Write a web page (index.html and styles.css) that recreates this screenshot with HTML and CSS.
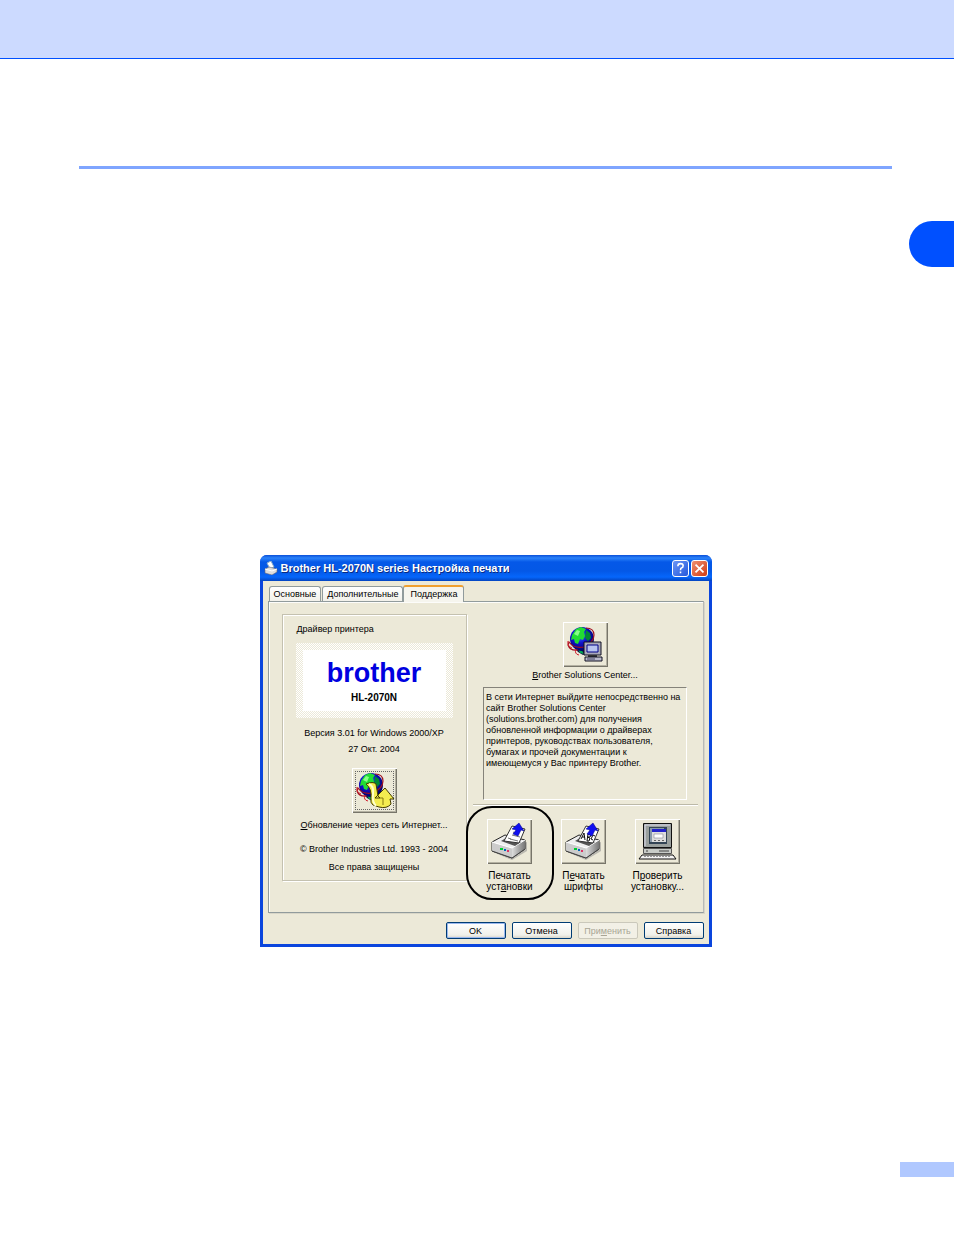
FILE: index.html
```html
<!DOCTYPE html>
<html lang="ru">
<head>
<meta charset="utf-8">
<title>Brother HL-2070N series Настройка печати</title>
<link rel="stylesheet" href="styles.css">
</head>
<body>
<svg class="defs" aria-hidden="true">
  <defs>
    <radialGradient id="sea" cx="40%" cy="35%" r="65%"><stop offset="0" stop-color="#38f"/><stop offset=".5" stop-color="#11c"/><stop offset="1" stop-color="#006"/></radialGradient>
    <linearGradient id="side" x1="0" x2="1"><stop offset="0" stop-color="#ddd"/><stop offset="1" stop-color="#777"/></linearGradient>
    <g id="globe">
      <path d="M11 25l4 5 5 3 6-3-2-7z" fill="#114"/>
      <path d="M14 26l4 1 3 5-4-1z" fill="#0a5"/>
      <circle cx="19" cy="17" r="12" fill="url(#sea)"/>
      <path d="M9 13l4-6 5-2 5 2-2 3 1 4-2 4-3-1-2 5-3-1-1-4-3 1z" fill="#2d3"/>
      <path d="M11 12l3-4 3 1-2 5z" fill="#8f8"/>
      <path d="M23 8l4 3 1 5-3 3-3-3z" fill="#083"/>
      <path d="M23 6q8 0 8 7t-10 12q-10 2-15-5l-1 3q2 6 10 5" fill="none" stroke="#a01020" stroke-width="1.2"/>
      <path d="M5 19q-1 5 4 7m4 1q-2 5 3 6" fill="none" stroke="#d02030"/>
    </g>
    <g id="printer">
      <path d="M6 33l19 8 15-9v-9z" fill="#888" opacity=".5"/>
      <path d="M5 23l13-7 20 5v9l-13 9-20-7z" fill="#eee" stroke="#222"/>
      <path d="M5 23l20 6v10L5 32z" fill="#ccc"/>
      <path d="M25 29l13-8v9l-13 9z" fill="url(#side)"/>
      <path d="M5 23l20 6 13-8" fill="none" stroke="#fff"/>
      <path d="M14 22l5-3 15 4-6 4z" fill="#555"/>
      <path d="M17 22l8-15 13 3-6 14z" fill="#fff" stroke="#333"/>
      <path d="M5 32l20 7 13-9" fill="none" stroke="#444"/>
      <path d="M13 29h3v2h-3z" fill="#0c3"/><path d="M17 30h2v2h-2z" fill="#06b"/><path d="M20 31h2v2h-2z" fill="#d36"/>
    </g>
    <path id="up" d="M25 10l7-6 5 8-3-1-3 6-5-2 3-4z" fill="#1010f0" stroke="#008" stroke-width=".5"/>
  </defs>
</svg>
<header class="page-head"></header>
<main class="page">
  <hr class="rule">
  <div class="chapter-mark"></div>
  <section class="dialog" aria-labelledby="dialog-title">
    <div class="titlebar">
      <svg class="title-icon" viewBox="0 0 14 14"><path d="M3 2l4-2 3 6-4 2z" fill="#fff" stroke="#8ac"/><path d="M1 8l4-2 8 2v3l-5 3-7-2z" fill="#ddd" stroke="#667" stroke-width=".6"/><path d="M1 8l7 2 5-2" fill="none" stroke="#fff"/></svg>
      <h1 class="title" id="dialog-title">Brother HL-2070N series Настройка печати</h1>
      <button class="caption-btn" type="button" aria-label="Справка по окну"><svg viewBox="0 0 17 17"><path d="M5.500 6q0-3 3-3t3 2.500q0 2-2 2.500-1 .5-1 2.500M8.500 12v2" fill="none" stroke="#fff" stroke-width="1.800"/></svg></button>
      <button class="caption-btn close" type="button" aria-label="Закрыть"><svg viewBox="0 0 17 17"><path d="M4 4l9 9M13 4l-9 9" stroke="#fff" stroke-width="2"/></svg></button>
    </div>
    <div class="client">
      <div class="tabs" role="tablist">
        <button class="tab" type="button" role="tab">Основные</button>
        <button class="tab" type="button" role="tab">Дополнительные</button>
        <button class="tab active" type="button" role="tab" aria-selected="true">Поддержка</button>
      </div>
      <div class="panel" role="tabpanel">
        <div class="driver">
          <h2 class="driver-title">Драйвер принтера</h2>
          <div class="logo-frame"><div class="logo-box">
            <span class="logo">brother</span>
            <strong class="model">HL-2070N</strong>
          </div></div>
          <p class="line">Версия 3.01 for Windows 2000/XP</p>
          <p class="line">27 Окт. 2004</p>
          <button class="icon-btn focused" type="button" aria-labelledby="update-label">
            <svg viewBox="0 0 45 45"><use href="#globe"/><path d="M14 16q7-3 10 0l2 12 2 2h-5l10-10 9 11h-4l1 5q-4 5-12 3l-6-2q-3-2-2-7 1-9-5-14z" fill="#f4ec50" stroke="#443c00"/><path d="M17 16q5 2 4 10t3 12" fill="none" stroke="#ffc" stroke-width="2"/><path d="M28 30h3v7" fill="none" stroke="#887a10"/></svg>
          </button>
          <p class="line update" id="update-label"><u>О</u>бновление через сеть Интернет...</p>
          <p class="line">© Brother Industries Ltd. 1993 - 2004</p>
          <p class="line">Все права защищены</p>
        </div>
        <div class="support">
          <button class="icon-btn" type="button" aria-labelledby="center-label">
            <svg viewBox="0 0 45 45"><use href="#globe"/><path d="M21 20h17v13H21z" fill="#aab" stroke="#112"/><path d="M24 23h11v7H24z" fill="#b8c4f0" stroke="#008"/><path d="M25 33h9v2h-9z" fill="#333"/><path d="M22 35h17v4H22z" fill="#bbc" stroke="#112"/><path d="M24 37h8" stroke="#446"/></svg>
          </button>
          <p class="center-label" id="center-label"><u>B</u>rother Solutions Center...</p>
          <p class="info">В сети Интернет выйдите непосредственно на<br>сайт Brother Solutions Center<br>(solutions.brother.com) для получения<br>обновленной информации о драйверах<br>принтеров, руководствах пользователя,<br>бумагах и прочей документации к<br>имеющемуся у Вас принтеру Brother.</p>
          <hr class="groove">
          <div class="actions">
            <div class="action ringed">
              <button class="icon-btn" type="button" aria-labelledby="a1"><svg viewBox="0 0 45 45"><use href="#printer"/><path d="M21 19l3 1m1-4l8 2m-10 2l8 2m-5-9l2 1" stroke="#777"/><use href="#up"/></svg></button>
              <span id="a1">Печатать<br>уст<u>а</u>новки</span>
            </div>
            <div class="action">
              <button class="icon-btn" type="button" aria-labelledby="a2"><svg viewBox="0 0 45 45"><use href="#printer"/><path d="M20 20l3-6 1 7m-3-3h3m2 4l1-7 3 1-1 2-3 0 3 1-1 3-2 0m8-5l-2-1-2 4 2 1" fill="none" stroke="#111"/><use href="#up"/></svg></button>
              <span id="a2">П<u>е</u>чатать<br>шрифты</span>
            </div>
            <div class="action">
              <button class="icon-btn" type="button" aria-labelledby="a3"><svg viewBox="0 0 45 45"><path d="M8.500 4.500h28v24h-28z" fill="#9aa09e" stroke="#111"/><path d="M10 27V6h25" fill="none" stroke="#dde"/><path d="M14 8h18v17H14z" fill="#345"/><path d="M15 9h14v14H15z" fill="#89a"/><path d="M17 10h14v13H17z" fill="#ddd"/><path d="M17 10h14v3H17z" fill="#22c"/><path d="M19 15h9v4h-9z" fill="#fff" stroke="#889" stroke-width=".6"/><path d="M19 21.500h2m2 0h2m2 0h2" stroke="#666"/><path d="M8.500 29.500h28v5h-28z" fill="#c8ccc8" stroke="#555"/><path d="M24 32h10M11 32h2" stroke="#444"/><path d="M7 36h31l3 4H4z" fill="#f4f4f4" stroke="#111"/><path d="M9 37.500h27" stroke="#999" stroke-dasharray="2 1"/></svg></button>
              <span id="a3">П<u>р</u>оверить<br>установку...</span>
            </div>
          </div>
        </div>
      </div>
      <div class="buttons">
        <button class="btn default" type="button">OK</button>
        <button class="btn" type="button">Отмена</button>
        <button class="btn" type="button" disabled>При<u>м</u>енить</button>
        <button class="btn" type="button">Справка</button>
      </div>
    </div>
  </section>
</main>
<footer class="page-foot"><div class="page-number"></div></footer>
</body>
</html>
```
FILE: styles.css
```css
* { box-sizing: border-box; }
body {
  margin: 0;
  min-height: 100vh;
  display: flex;
  flex-direction: column;
  background: #fff;
  color: #000;
  font: 9px/12px "Liberation Sans", Arial, sans-serif;
}
h1, h2, p { margin: 0; font-size: inherit; font-weight: normal; }
button { font: inherit; color: inherit; padding: 0; border: 0; }
svg { display: block; }
.defs { position: absolute; width: 0; height: 0; }

.page-head { height: 59px; background: #ccdaff; border-bottom: 1px solid #0050ff; }
.page { display: flow-root; padding: 107px 62px 0 79px; }
.rule { margin: 0; border: 0; height: 3px; background: #7fa5ff; }
.chapter-mark {
  width: 45px;
  height: 46px;
  margin: 52px -62px 288px auto;
  border-radius: 23px 0 0 23px;
  background: #0050ff;
}
.page-foot { margin-top: auto; padding-bottom: 58px; }
.page-number { width: 54px; height: 15px; margin-left: auto; background: #b0c8ff; }

.dialog {
  max-width: 452px;
  margin: 0 auto;
  border-radius: 7px 7px 0 0;
  overflow: hidden;
  background: #0a45dd;
}
.titlebar {
  height: 26px;
  display: flex;
  align-items: center;
  gap: 2px;
  padding: 0 4px;
  background: linear-gradient(#0a4fd8, #2b83fa 3px, #0558e8 7px, #0458e6 16px, #0566fb 22px, #0344c0);
}
.title-icon { width: 14px; height: 14px; margin-right: 1px; }
.title {
  flex: 1;
  font-size: 11px;
  font-weight: bold;
  color: #fff;
  text-shadow: 1px 1px 0 #0a2a80;
  white-space: nowrap;
}
.caption-btn {
  width: 17px;
  height: 17px;
  border: 1px solid #fff;
  border-radius: 3px;
  background: linear-gradient(135deg, #6b95f5, #2458dc);
}
.close { background: linear-gradient(135deg, #f09070, #d03c14); }

.client { margin: 0 3px 3px; padding: 4px 5px 5px; background: #ece9d8; }
.tabs { display: flex; align-items: flex-end; padding-left: 1px; }
.tab {
  height: 15px;
  margin-right: 1px;
  padding: 0 4px;
  border: 1px solid #919b9c;
  border-bottom: 0;
  border-radius: 3px 3px 0 0;
  background: linear-gradient(#fff, #f2f1ea);
  white-space: nowrap;
}
.active {
  position: relative;
  height: 17px;
  margin: 0 0 -1px -1px;
  padding: 0 6px 2px;
  border-top: 2px solid #f0a030;
  background: #f6f5ee;
}
.panel {
  display: flex;
  gap: 6px;
  padding: 12px 5px 20px 13px;
  border: 1px solid #919b9c;
  border-right-color: #b8bab8;
  box-shadow: inset 1px 1px #fcfcfa, 1px 1px #d8d6c8;
}
.driver {
  width: 185px;
  height: 267px;
  display: flex;
  flex-direction: column;
  align-items: center;
  padding: 8px 0 0;
  border: 1px solid #c4c1b0;
  box-shadow: inset 1px 1px #fff, 1px 1px #fff;
}
.driver-title { align-self: flex-start; margin: 0 0 8px 14px; }
.logo-frame {
  width: 157px;
  padding: 7px;
  margin-bottom: 9px;
  background: repeating-conic-gradient(#fff 0 25%, #ece9d8 0 50%) 0 0 / 2px 2px;
}
.logo-box {
  display: flex;
  flex-direction: column;
  align-items: center;
  height: 61px;
  padding-top: 8px;
  background: #fff;
}
.logo { font-size: 27px; line-height: 30px; font-weight: bold; color: #0000e0; }
.model { font-size: 10px; line-height: 20px; }
.line { margin-bottom: 4px; white-space: nowrap; }
.icon-btn {
  width: 45px;
  height: 45px;
  flex: none;
  background: #ece9d8;
  box-shadow: inset 1px 1px #fff, inset -1px -1px #77756a, inset -2px -2px #b4b1a2;
}
.focused { margin: 9px 0 6px; outline: 1px dotted #666; outline-offset: -4px; }
.update { margin-bottom: 12px; }
.line:last-child { margin-top: 2px; }

.support { flex: 1; display: flex; flex-direction: column; align-items: center; padding-top: 8px; }
.center-label { margin: 2px 0 6px; }
.info {
  width: 204px;
  height: 113px;
  padding: 4px 2px;
  border: 1px solid #85837a;
  border-right-color: #fff;
  border-bottom-color: #fff;
  line-height: 11px;
  white-space: nowrap;
}
.groove { width: 100%; margin: 4px 0 13px; border: 0; border-top: 1px solid #bcb9a8; border-bottom: 1px solid #fff; }
.actions { align-self: stretch; display: grid; grid-template-columns: repeat(3, 1fr); padding-right: 3px; }
.action {
  position: relative;
  display: flex;
  flex-direction: column;
  align-items: center;
  gap: 6px;
  font-size: 10px;
  line-height: 11px;
  text-align: center;
  white-space: nowrap;
}
.ringed::after {
  content: "";
  position: absolute;
  inset: -13px -7px -8px;
  border: 2px solid #000;
  border-radius: 26px;
  pointer-events: none;
}

.buttons { display: flex; justify-content: flex-end; gap: 6px; padding-top: 9px; }
.btn {
  width: 60px;
  height: 17px;
  border: 1px solid #003c74;
  border-radius: 2px;
  background: linear-gradient(#fff, #f0f0ea 80%, #d8d4c8);
}
.default { box-shadow: inset 0 0 0 1px #9ab8ee; }
.btn:disabled { color: #a8a595; border-color: #cac8bb; background: #f2f0e6; }
```
